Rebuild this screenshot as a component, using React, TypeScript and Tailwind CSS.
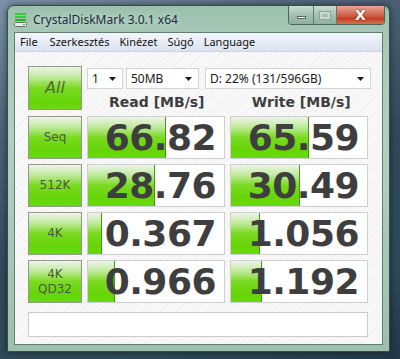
import React from "react"

interface Row {
  label: string[]
  read: string
  readFill: number
  write: string
  writeFill: number
}

const rows: Row[] = [
  { label: ["Seq"], read: "66.82", readFill: 57, write: "65.59", writeFill: 57 },
  { label: ["512K"], read: "28.76", readFill: 49, write: "30.49", writeFill: 51 },
  { label: ["4K"], read: "0.367", readFill: 10, write: "1.056", writeFill: 21 },
  { label: ["4K", "QD32"], read: "0.966", readFill: 20, write: "1.192", writeFill: 23 },
]

const green =
  "bg-[linear-gradient(to_bottom,#eef4ea_0%,#bfe99a_25%,#7ada22_50%,#66d408_80%,#6cd80e_100%)]"

function DiskIcon() {
  return (
    <svg width="13" height="14" viewBox="0 0 13 14">
      <rect x="1" y="0" width="11" height="2" fill="#3cc83c" />
      <rect x="1" y="3" width="11" height="2" fill="#3cc83c" />
      <rect x="1" y="6" width="11" height="2" fill="#2fb02f" />
      <rect x="0.5" y="9.5" width="12" height="4" rx="1" fill="#e8e8e8" stroke="#707070" />
      <rect x="9" y="11" width="2" height="1" fill="#30c030" />
    </svg>
  )
}

function Dropdown({ text, w }: { text: string; w: string }) {
  return (
    <div
      className={`${w} h-[21px] flex items-center justify-between bg-white border border-[#d4d4d4] pl-[4px] pr-[6px] text-[12px] text-[#1a1a1a]`}
    >
      <span>{text}</span>
      <svg width="7" height="4" viewBox="0 0 7 4">
        <path d="M0 0h7L3.5 4z" fill="#1a1a1a" />
      </svg>
    </div>
  )
}

function ValueBox({ value, fill }: { value: string; fill: number }) {
  return (
    <div className="relative h-[43px] flex-1 bg-white border border-[#cfcfcf] overflow-hidden">
      <div
        className={`absolute left-0 top-0 bottom-0 border-r border-[#3f9c10] ${green}`}
        style={{ width: `${fill}%` }}
      />
      <div className="relative h-full flex items-center justify-end pr-[8px] font-['DejaVu_Sans',sans-serif] font-bold text-[36px] leading-none text-[#3e3e3e] tracking-[-0.5px]">
        {value}
      </div>
    </div>
  )
}

export default function App() {
  return (
    <div className="w-[400px] h-[359px] overflow-hidden bg-[linear-gradient(160deg,#7d93aa_0%,#4d6379_25%,#33485c_55%,#2d4a58_80%,#23384a_100%)] font-['Noto_Sans',sans-serif]">
      <div className="ml-[7px] mt-[5px] w-[383px] h-[347px] rounded-t-[7px] border border-[#34503f] bg-[linear-gradient(to_bottom,#9cc0ae_0%,#a9c9b9_10%,#b6cec2_40%,#9fbfae_100%)] shadow-[0_0_6px_rgba(0,0,0,0.5)] flex flex-col">
        {/* title bar */}
        <div className="h-[26px] flex items-start">
          <div className="flex items-center pl-[6px] pt-[7px] gap-[6px]">
            <DiskIcon />
            <span className="text-[12px] text-[#1b2b3b] leading-none [text-shadow:0_0_6px_#e6f0ea]">
              CrystalDiskMark 3.0.1 x64
            </span>
          </div>
          <div className="ml-auto mr-[4px] flex h-[19px] rounded-b-[4px] border border-t-0 border-[#49665a] overflow-hidden">
            <div className="w-[25px] flex items-end justify-center pb-[5px] bg-[linear-gradient(to_bottom,#c9dcd2,#a3c0b2_50%,#8fb0a1)] border-r border-[#5d7a6c]">
              <div className="w-[9px] h-[3px] bg-white border border-[#566a60]" />
            </div>
            <div className="w-[23px] flex items-center justify-center bg-[linear-gradient(to_bottom,#c9dcd2,#a3c0b2_50%,#8fb0a1)] border-r border-[#5d7a6c]">
              <div className="w-[10px] h-[7px] border-2 border-[#c8d8d0] outline outline-1 outline-[#8aa596]" />
            </div>
            <div className="w-[47px] flex items-center justify-center bg-[linear-gradient(to_bottom,#e5a89a,#d0634a_50%,#c04026_70%,#d9704f)]">
              <span className="text-white font-['DejaVu_Sans',sans-serif] font-bold text-[14px] leading-none [text-shadow:0_0_2px_#5a2010]">
                X
              </span>
            </div>
          </div>
        </div>

        {/* client */}
        <div className="mx-[6px] flex-1 mb-[6px] border border-[#5f7f6f] bg-[repeating-linear-gradient(135deg,#f8f8f8_0px,#f8f8f8_3px,#f1f1f1_3px,#f1f1f1_4px)] flex flex-col">
          <div className="h-[19px] flex items-center gap-[10px] pl-[5px] text-[11px] text-[#111] bg-[linear-gradient(to_bottom,#f3f6fb,#e4eaf4_60%,#dbe2ee)] border-b border-[#cdd4de]">
            <span className="mr-[2px]">File</span>
            <span>Szerkesztés</span>
            <span>Kinézet</span>
            <span>Súgó</span>
            <span>Language</span>
          </div>

          <div className="pl-[13px] pr-[14px] pt-[14px] flex flex-col">
            <div className="flex gap-[5px]">
              <div
                className={`w-[54px] h-[44px] shrink-0 flex items-center justify-center border border-[#8f9a8a] ${green}`}
              >
                <span className="text-[16px] text-[#4e6640] italic font-['DejaVu_Sans',sans-serif]">All</span>
              </div>
              <div className="flex-1 flex flex-col pt-[2px]">
                <div className="flex">
                  <Dropdown text="1" w="w-[36px]" />
                  <div className="w-[3px]" />
                  <Dropdown text="50MB" w="w-[73px]" />
                  <div className="w-[6px]" />
                  <Dropdown text="D: 22% (131/596GB)" w="w-[166px]" />
                </div>
                <div className="flex gap-[5px] mt-[3px] font-['DejaVu_Sans',sans-serif] font-bold text-[14px] text-[#3e3e3e] leading-[20px]">
                  <div className="flex-1 text-center">Read [MB/s]</div>
                  <div className="flex-1 text-center">Write [MB/s]</div>
                </div>
              </div>
            </div>

            <div className="flex flex-col gap-[5px] mt-[4px]">
              {rows.map((r) => (
                <div key={r.label.join("-")} className="flex gap-[5px]">
                  <div
                    className={`w-[54px] h-[43px] shrink-0 flex flex-col items-center justify-center border border-[#8f9a8a] ${green} font-['DejaVu_Sans',sans-serif] text-[12px] leading-[15px] text-[#4a5a40]`}
                  >
                    {r.label.map((l) => (
                      <span key={l}>{l}</span>
                    ))}
                  </div>
                  <ValueBox value={r.read} fill={r.readFill} />
                  <ValueBox value={r.write} fill={r.writeFill} />
                </div>
              ))}
            </div>

            <div className="mt-[9px] h-[25px] bg-white border border-[#cbcbcb]" />
          </div>
        </div>
      </div>
    </div>
  )
}
